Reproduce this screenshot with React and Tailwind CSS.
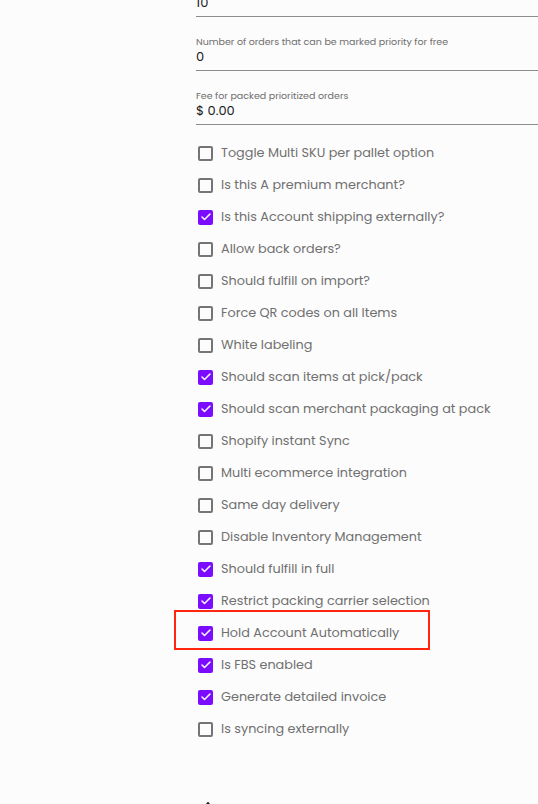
import React from 'react';
import { Check, Upload } from 'lucide-react';

const fields = [
  { label: '', value: '10' },
  { label: 'Number of orders that can be marked priority for free', value: '0' },
  { label: 'Fee for packed prioritized orders', value: '$ 0.00' },
];

const options = [
  { label: 'Toggle Multi SKU per pallet option', checked: false },
  { label: 'Is this A premium merchant?', checked: false },
  { label: 'Is this Account shipping externally?', checked: true },
  { label: 'Allow back orders?', checked: false },
  { label: 'Should fulfill on import?', checked: false },
  { label: 'Force QR codes on all Items', checked: false },
  { label: 'White labeling', checked: false },
  { label: 'Should scan items at pick/pack', checked: true },
  { label: 'Should scan merchant packaging at pack', checked: true },
  { label: 'Shopify instant Sync', checked: false },
  { label: 'Multi ecommerce integration', checked: false },
  { label: 'Same day delivery', checked: false },
  { label: 'Disable Inventory Management', checked: false },
  { label: 'Should fulfill in full', checked: true },
  { label: 'Restrict packing carrier selection', checked: true },
  { label: 'Hold Account Automatically', checked: true, highlight: true },
  { label: 'Is FBS enabled', checked: true },
  { label: 'Generate detailed invoice', checked: true },
  { label: 'Is syncing externally', checked: false },
];

const Box = ({ checked }) =>
  checked ? (
    <span className="flex h-[15px] w-[15px] items-center justify-center rounded-[2px] bg-[#7b0cff]">
      <Check className="h-[12px] w-[12px] text-white" strokeWidth={3} />
    </span>
  ) : (
    <span className="h-[15px] w-[15px] rounded-[2px] border-2 border-[#757575]" />
  );

export default function App() {
  return (
    <div className="h-screen overflow-hidden bg-[#fcfcfc] font-['Poppins','Lato',sans-serif]">
      <div className="-mt-[37px] pl-[196px]">
        {fields.map((f, i) => (
          <div key={i} className="border-b border-[#8c8c8c] pt-[19px] pb-[4px]">
            <div className="h-[12px] text-[9.5px] leading-[12px] text-[#6e6e6e]">{f.label}</div>
            <div className="h-[18px] text-[13px] leading-[18px] text-[#1a1a1a]">{f.value}</div>
          </div>
        ))}

        <div className="mt-[12px] flex flex-col">
          {options.map((o, i) => (
            <div key={i} className="relative flex h-[32px] items-center pl-[2px]">
              {o.highlight && (
                <div className="absolute -left-[22px] -top-[7px] h-[40px] w-[256px] border-2 border-[#ff250f]" />
              )}
              <Box checked={o.checked} />
              <span className="ml-[8px] text-[12.8px] text-[#707070]">{o.label}</span>
            </div>
          ))}
        </div>

        <div className="mt-[54px] flex items-center gap-[10px] pl-[4px] text-[13px] text-[#6b6b6b]">
          <Upload className="h-[16px] w-[16px] text-[#222]" strokeWidth={2.5} />
          <span>Upload merchant logo</span>
        </div>
      </div>
    </div>
  );
}
